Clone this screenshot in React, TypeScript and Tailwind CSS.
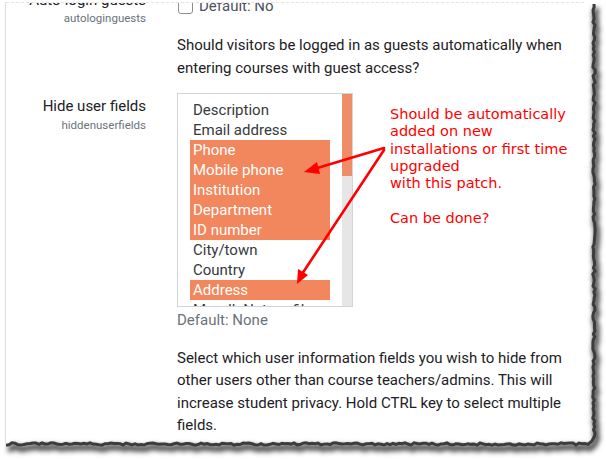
import React from "react";

const fields = [
  { name: "Description", on: false },
  { name: "Email address", on: false },
  { name: "Phone", on: true },
  { name: "Mobile phone", on: true },
  { name: "Institution", on: true },
  { name: "Department", on: true },
  { name: "ID number", on: true },
  { name: "City/town", on: false },
  { name: "Country", on: false },
  { name: "Address", on: true },
  { name: "MoodleNet profile", on: false },
];

const note = [
  "Should be automatically",
  "added on new",
  "installations or first time",
  "upgraded",
  "with this patch.",
  "",
  "Can be done?",
];

// jagged torn edge along right and bottom of the card
function tornPath() {
  let seed = 7;
  const rnd = () => {
    seed = (seed * 9301 + 49297) % 233280;
    return seed / 233280;
  };
  const pts: string[] = [];
  for (let y = 4; y <= 436; y += 3) {
    pts.push(`${594 + (rnd() - 0.5) * 2.4},${y}`);
  }
  pts.push("592,441");
  for (let x = 588; x >= 6; x -= 3) {
    pts.push(`${x},${444 + (rnd() - 0.5) * 2.4}`);
  }
  return "M" + pts.join(" L");
}

function TornEdge() {
  const d = tornPath();
  return (
    <svg className="pointer-events-none absolute left-0 top-0" width="606" height="460">
      <defs>
        <filter id="blur" x="-10%" y="-10%" width="120%" height="120%">
          <feGaussianBlur stdDeviation="2.4" />
        </filter>
      </defs>
      <path d={d} transform="translate(2,4)" fill="none" stroke="#000" strokeOpacity="0.7" strokeWidth="6" filter="url(#blur)" />
      <path d={d} fill="none" stroke="#3c3c3c" strokeWidth="3" />
      <path d="M5.5 2 L5.5 443" stroke="#dedede" strokeWidth="1" />
      <path d="M6 2.5 L585 2.5" stroke="#e4e4e4" strokeWidth="1" strokeDasharray="3 2" />
    </svg>
  );
}

function Arrows() {
  return (
    <svg className="pointer-events-none absolute left-0 top-0" width="606" height="460">
      <g stroke="#ff0000" strokeWidth="2.6" strokeLinecap="round" fill="#ff0000">
        <line x1="384" y1="148" x2="314" y2="169" />
        <line x1="384" y1="150" x2="302" y2="274" />
      </g>
      <polygon points="304,172 317,162 320,174" fill="#ff0000" />
      <polygon points="297,284 298,269 308,275" fill="#ff0000" />
    </svg>
  );
}

export default function App() {
  return (
    <div className="relative h-[460px] w-[606px] overflow-hidden bg-white font-['Roboto',sans-serif]">
      <div className="ml-[6px] mt-[3px] h-[441px] w-[588px] overflow-hidden bg-white">
        <div className="-mt-[14px] flex">
          <div className="w-[140px] shrink-0 text-right">
            <div className="text-[15px] leading-[22px] text-[#1d2125]">Auto-login guests</div>
            <div className="-mt-[1px] text-[11.5px] leading-[16px] text-[#6a737b]">autologinguests</div>
          </div>
          <div className="ml-[31px] mt-[6px] w-[400px]">
            <div className="flex items-center text-[15px] leading-[22px] text-[#4a5260]">
              <span className="ml-[1px] inline-block h-[15px] w-[15px] rounded-[3px] border border-[#8a8f94] bg-white" />
              <span className="ml-[6px]">Default: No</span>
            </div>
            <p className="mt-[17px] text-[15px] leading-[22.5px] text-[#1d2125]">
              Should visitors be logged in as guests automatically when entering courses with guest access?
            </p>
          </div>
        </div>

        <div className="mt-[14px] flex">
          <div className="mt-[2px] w-[140px] shrink-0 text-right">
            <div className="text-[15px] leading-[22px] text-[#1d2125]">Hide user fields</div>
            <div className="text-[11.5px] leading-[16px] text-[#6a737b]">hiddenuserfields</div>
          </div>
          <div className="ml-[31px] w-[395px]">
            <div className="flex h-[214px] w-[176px] overflow-hidden border border-[#ced4da] bg-white">
              <div className="w-[164px] px-[12px] pt-[6px]">
                {fields.map((f) => (
                  <div
                    key={f.name}
                    className={
                      "h-[20px] whitespace-nowrap px-[3px] text-[15px] leading-[21px] " +
                      (f.on ? "bg-[#f2865c] text-white" : "text-[#373a3c]")
                    }
                  >
                    {f.name}
                  </div>
                ))}
              </div>
              <div className="flex w-[10px] flex-col bg-[#e6e6e6]">
                <div className="h-[82px] bg-[#ef8d68]" />
              </div>
            </div>
            <div className="mt-[2px] text-[15px] leading-[22.5px] text-[#6a737b]">Default: None</div>
            <p className="mt-[15px] text-[15px] leading-[22.5px] text-[#1d2125]">
              Select which user information fields you wish to hide from other users other than course teachers/admins. This will increase student privacy. Hold CTRL key to select multiple fields.
            </p>
          </div>
        </div>
      </div>

      <div className="absolute left-[390px] top-[106px] font-['DejaVu_Sans',sans-serif] text-[14.5px] leading-[17.3px] text-[#ff0000]">
        {note.map((l, i) => (
          <div key={i} className="h-[17.3px] whitespace-pre">
            {l}
          </div>
        ))}
      </div>

      <Arrows />
      <TornEdge />
    </div>
  );
}
